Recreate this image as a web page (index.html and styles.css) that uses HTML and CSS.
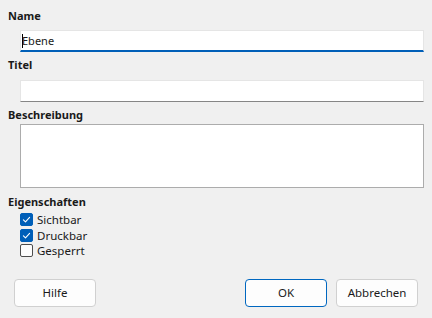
FILE: index.html
```html
<!DOCTYPE html>
<html>
<head>
<meta charset="utf-8">
<link rel="stylesheet" href="styles.css">
</head>
<body>
<div class="dialog">
  <div class="label l-name">Name</div>
  <div class="field focused"><span class="caret"></span>Ebene</div>
  <div class="label l-titel">Titel</div>
  <div class="field"></div>
  <div class="label l-desc">Beschreibung</div>
  <div class="area"></div>
  <div class="label l-props">Eigenschaften</div>
  <div class="checks">
    <div class="check"><span class="box on"><svg viewBox="0 0 13 13" width="13" height="13"><path d="M3.4 6.8 L5.5 8.8 L9.6 4.4" fill="none" stroke="#fff" stroke-width="1.1" stroke-linecap="round" stroke-linejoin="round"/></svg></span>Sichtbar</div>
    <div class="check"><span class="box on"><svg viewBox="0 0 13 13" width="13" height="13"><path d="M3.4 6.8 L5.5 8.8 L9.6 4.4" fill="none" stroke="#fff" stroke-width="1.1" stroke-linecap="round" stroke-linejoin="round"/></svg></span>Druckbar</div>
    <div class="check"><span class="box"></span>Gesperrt</div>
  </div>
  <div class="buttons">
    <div class="btn">Hilfe</div>
    <div class="spacer"></div>
    <div class="btn default">OK</div>
    <div class="btn">Abbrechen</div>
  </div>
</div>
</body>
</html>
```
FILE: styles.css
```css
html, body {
  margin: 0;
  padding: 0;
  background: #f0f0f0;
}
body {
  width: 432px;
  height: 318px;
  overflow: hidden;
  font-family: "Noto Sans", "Open Sans", sans-serif;
  font-size: 11px;
  color: #1a1a1a;
}
.dialog {
  padding: 8px 8px 0 8px;
  display: flex;
  flex-direction: column;
}
.label {
  font-weight: bold;
  line-height: 16px;
  height: 16px;
  color: #1a1a1a;
}
.l-name { margin-bottom: 6px; }
.l-titel { margin-top: 5px; margin-bottom: 7px; }
.l-desc { margin-top: 5px; margin-bottom: 1px; }
.l-props { margin-top: 6px; margin-bottom: 2px; }
.field {
  margin-left: 12px;
  height: 20px;
  background: #fff;
  border: 1px solid #e5e5e5;
  border-bottom: 1px solid #868686;
  line-height: 20px;
  padding-left: 1px;
  box-sizing: content-box;
  width: 401px;
  position: relative;
  color: #1a1a1a;
}
.field.focused {
  border-bottom: 2px solid #005fb8;
  height: 19px;
}
.caret {
  display: inline-block;
  width: 1px;
  height: 14px;
  background: #000;
  vertical-align: -3px;
  margin-right: -1px;
}
.area {
  margin-left: 12px;
  width: 402px;
  height: 62px;
  background: #fff;
  border: 1px solid #acacac;
}
.checks {
  margin-left: 12px;
  display: flex;
  flex-direction: column;
}
.check {
  height: 15.5px;
  display: flex;
  align-items: center;
  line-height: 15px;
  color: #1a1a1a;
  font-size: 11.5px;
}
.box {
  width: 11px;
  height: 11px;
  border: 1px solid #4d4d4d;
  border-radius: 2px;
  background: #fdfdfd;
  margin-right: 4px;
  position: relative;
  flex: none;
}
.box.on {
  background: #005fb8;
  border-color: #005fb8;
}
.box svg {
  position: absolute;
  left: -1px;
  top: -1px;
}
.buttons {
  margin-top: 20px;
  margin-left: 6px;
  margin-right: 6px;
  display: flex;
  gap: 9px;
}
.spacer { flex: 1; }
.btn {
  width: 80px;
  height: 26px;
  border: 1px solid #d0d0d0;
  border-radius: 4px;
  background: #fdfdfd;
  text-align: center;
  line-height: 26px;
  color: #1a1a1a;
  font-size: 11.5px;
}
.btn.default {
  border-color: #0067c0;
}
```
